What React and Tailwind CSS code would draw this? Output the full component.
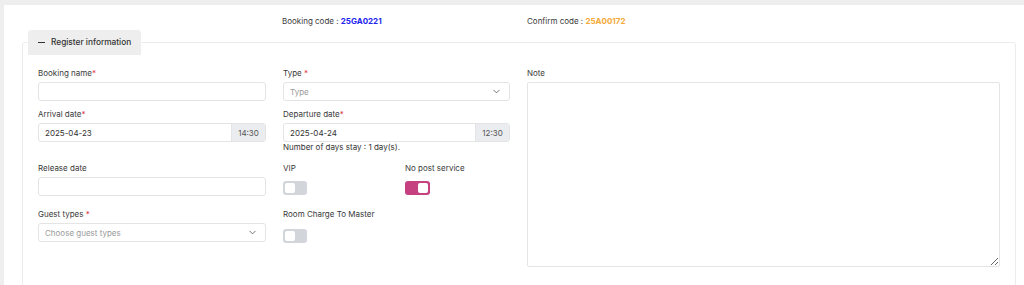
import { ChevronDown } from 'lucide-react';

const font = { fontFamily: 'Inter, "Noto Sans", sans-serif' };

function Label({ children, required, gap }) {
  return (
    <div className="text-[8px] leading-[12px] text-[#3a3a3a] mb-[3px]">
      {children}
      {required && <span className="text-[#e0343f]">{gap ? ' *' : '*'}</span>}
    </div>
  );
}

function TextInput({ value, placeholder }) {
  return (
    <div className="h-[19px] border border-[#e4e4e4] rounded-[3px] bg-white px-[6px] flex items-center text-[8px] text-[#333]">
      {value || <span className="text-[#9a9a9a]">{placeholder}</span>}
    </div>
  );
}

function SelectInput({ placeholder }) {
  return (
    <div className="h-[19px] border border-[#e4e4e4] rounded-[3px] bg-white pl-[6px] pr-[7px] flex items-center justify-between text-[8px] text-[#9a9a9a]">
      <span>{placeholder}</span>
      <ChevronDown size={11} strokeWidth={1.6} className="text-[#444]" />
    </div>
  );
}

function DateTime({ date, time }) {
  return (
    <div className="h-[19px] flex border border-[#e4e4e4] rounded-[3px] bg-white text-[8px] overflow-hidden">
      <div className="flex-1 flex items-center px-[6px] text-[#333]">{date}</div>
      <div className="w-[34px] flex items-center justify-center bg-[#eaecef] border-l border-[#e4e4e4] text-[#555]">
        {time}
      </div>
    </div>
  );
}

function Toggle({ on }) {
  return (
    <div
      className={
        on
          ? 'w-[25px] h-[14px] rounded-[3px] bg-[#c6417f] p-[2px] flex justify-end'
          : 'w-[24px] h-[14px] rounded-[3px] bg-[#d2d6da] p-[2px] flex justify-start'
      }
    >
      <div className="w-[10px] h-[10px] rounded-[2px] bg-white" />
    </div>
  );
}

export default function App() {
  return (
    <div className="h-[285px] bg-[#eeeeee] pt-[5px] pl-[4px] overflow-hidden" style={font}>
      <div className="bg-white h-full pl-[18px] pr-[8px]">
        {/* codes */}
        <div className="grid grid-cols-[228px_227px_1fr] gap-x-[17px] px-[16px] pt-[10px] text-[8px] leading-[12px] text-[#3a3a3a]">
          <div />
          <div className="-ml-[1px]">
            Booking code : <span className="font-bold text-[#2323ee]">25GA0221</span>
          </div>
          <div>
            Confirm code : <span className="font-bold text-[#f5a938]">25A00172</span>
          </div>
        </div>

        {/* register information */}
        <div className="mt-[3px]">
          <div className="relative z-10 ml-[6px] w-fit flex items-center gap-[6px] h-[25px] px-[10px] bg-[#eeeeee] rounded-t-[3px] text-[8.3px] font-medium text-[#333]">
            <span className="w-[7px] h-[1px] bg-[#333]" />
            Register information
          </div>
          <div className="-mt-[13px] border border-[#ececec] rounded-[3px] h-[260px] px-[15px] pt-[24px] flex gap-x-[17px] items-start">
            <div className="w-[472px] shrink-0 grid grid-cols-[228px_227px] gap-x-[17px] items-start">
              {/* row 1 */}
              <div>
                <Label required>Booking name</Label>
                <TextInput />
              </div>
              <div>
                <Label required gap>Type</Label>
                <SelectInput placeholder="Type" />
              </div>

              {/* row 2 */}
              <div className="pt-[7px]">
                <Label required>Arrival date</Label>
                <DateTime date="2025-04-23" time="14:30" />
              </div>
              <div className="pt-[7px]">
                <Label required>Departure date</Label>
                <DateTime date="2025-04-24" time="12:30" />
                <div className="text-[8px] leading-[11px] text-[#333]">Number of days stay : 1 day(s).</div>
              </div>

              {/* row 3 */}
              <div className="pt-[9px]">
                <Label>Release date</Label>
                <TextInput />
              </div>
              <div className="pt-[9px] grid grid-cols-[122px_1fr]">
                <div>
                  <div className="text-[8px] leading-[12px] text-[#3a3a3a] mb-[7px]">VIP</div>
                  <Toggle />
                </div>
                <div>
                  <div className="text-[8px] leading-[12px] text-[#3a3a3a] mb-[7px]">No post service</div>
                  <Toggle on />
                </div>
              </div>

              {/* row 4 */}
              <div className="pt-[12px]">
                <Label required gap>Guest types</Label>
                <SelectInput placeholder="Choose guest types" />
              </div>
              <div className="pt-[12px]">
                <div className="text-[8px] leading-[12px] text-[#3a3a3a] mb-[9px]">Room Charge To Master</div>
                <Toggle />
              </div>
            </div>

            {/* note */}
            <div className="flex-1">
              <Label>Note</Label>
              <textarea className="block w-full h-[185px] border border-[#e4e4e4] rounded-[2px] outline-none" />
            </div>
          </div>
        </div>
      </div>
    </div>
  );
}
